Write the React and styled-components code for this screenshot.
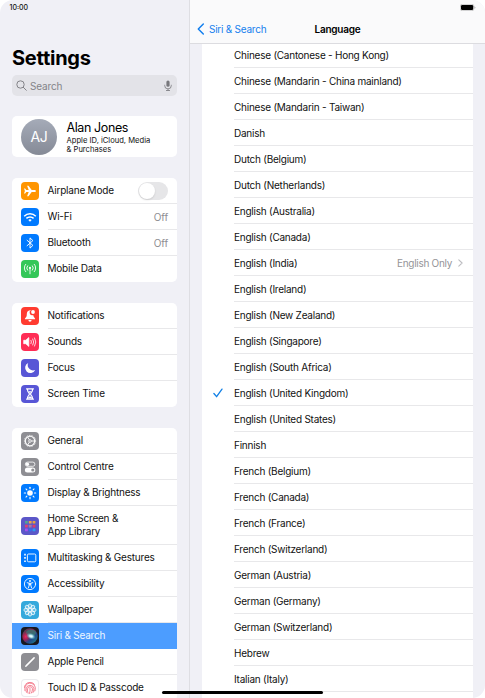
import React, { useState } from 'react';
import styled, { createGlobalStyle } from 'styled-components';

const languages = [
  'Chinese (Cantonese - Hong Kong)',
  'Chinese (Mandarin - China mainland)',
  'Chinese (Mandarin - Taiwan)',
  'Danish',
  'Dutch (Belgium)',
  'Dutch (Netherlands)',
  'English (Australia)',
  'English (Canada)',
  'English (India)',
  'English (Ireland)',
  'English (New Zealand)',
  'English (Singapore)',
  'English (South Africa)',
  'English (United Kingdom)',
  'English (United States)',
  'Finnish',
  'French (Belgium)',
  'French (Canada)',
  'French (France)',
  'French (Switzerland)',
  'German (Austria)',
  'German (Germany)',
  'German (Switzerland)',
  'Hebrew',
  'Italian (Italy)',
];

const petals = [0, 45, 90, 135, 180, 225, 270, 315];

// glyphs are drawn on an 18 x 18 grid
const glyphs = {
  airplane: (
    <path fill="#fff" d="M15 9c0-.7-.9-1.1-1.8-1.1h-2.5L7.5 3.7H6.1l1.6 4.2H5.3L4.1 6.6H3L3.9 9 3 11.4h1.1l1.2-1.3h2.4l-1.6 4.2h1.4l3.2-4.2h2.5c.9 0 1.8-.4 1.8-1.1z" />
  ),
  wifi: (
    <g fill="none" stroke="#fff" strokeWidth="1.5">
      <path d="M3.2 8.2a8.2 8.2 0 0 1 11.6 0" />
      <path d="M5.4 10.4a5.1 5.1 0 0 1 7.2 0" />
      <path d="M9 13.8l-1.7-1.7a2.4 2.4 0 0 1 3.4 0z" fill="#fff" stroke="none" />
    </g>
  ),
  bluetooth: (
    <path fill="none" stroke="#fff" strokeWidth=".95" strokeLinejoin="round" strokeLinecap="round" d="M6.1 6.3l5.8 5.1L9 14.1V3.9l2.9 2.7-5.8 5.1" />
  ),
  mobile: (
    <g fill="none" stroke="#fff" strokeWidth=".9" strokeLinecap="round">
      <path d="M9 8.6v5.2" />
      <circle cx="9" cy="7.9" r="1.1" fill="#fff" stroke="none" />
      <path d="M6.6 5.8a3.3 3.3 0 0 0 0 4.4M11.4 5.8a3.3 3.3 0 0 1 0 4.4M4.7 4.3a5.4 5.4 0 0 0 0 7.4M13.3 4.3a5.4 5.4 0 0 1 0 7.4" />
    </g>
  ),
  bell: (
    <g fill="#fff">
      <path d="M9 3.2c-2.3.2-3.2 2-3.2 4 0 2.2-.6 3-1.8 4.2-.3.4 0 .9.4.9h9.2c.4 0 .7-.5.4-.9-1-1-1.6-1.8-1.8-3.3A2.7 2.7 0 0 1 9.800 3.300z" />
      <path d="M7.4 13.1h3.2a1.6 1.6 0 0 1-3.2 0z" />
      <circle cx="12" cy="5" r="1.9" />
    </g>
  ),
  sounds: (
    <g fill="none" stroke="#fff" strokeWidth=".8" strokeLinecap="round">
      <path d="M3 7.3h1.8l3-2.7v8.8l-3-2.7H3z" fill="#fff" strokeLinejoin="round" />
      <path d="M10 7.3q1 1.7 0 3.4M11.8 6q1.9 3 0 6M13.6 4.9q2.6 4.1 0 8.2" />
    </g>
  ),
  moon: <path fill="#fff" d="M7.2 3.9A5.3 5.3 0 1 0 14.2 11 5.4 5.4 0 0 1 7.2 3.9z" />,
  hourglass: (
    <g fill="none" stroke="#fff" strokeWidth="1.2">
      <path d="M5.5 3.9h7M5.5 14.1h7" strokeLinecap="round" />
      <path d="M6.6 4v1.5c0 1.6 1.8 2.2 1.8 3.5S6.6 10.9 6.6 12.5V14M11.4 4v1.5c0 1.6-1.8 2.2-1.8 3.5s1.8 1.9 1.8 3.5V14" />
      <path d="M7.4 6.2h3.2L9 8zM7 13.6c0-1.6 1-2 2-2s2 .4 2 2z" fill="#fff" stroke="none" />
    </g>
  ),
  gear: (
    <g fill="none" stroke="#fff">
      <circle cx="9" cy="9" r="4.7" strokeWidth="1.1" />
      <circle cx="9" cy="9" r="5.6" strokeWidth="1" strokeDasharray=".9 .86" />
      <circle cx="9" cy="9" r="1.3" strokeWidth=".8" />
      <path d="M10.3 9h3.3M8.3 7.8L6.7 5M8.3 10.2L6.7 13" strokeWidth=".9" />
    </g>
  ),
  toggles: (
    <g>
      <rect x="4.3" y="4.1" width="9.6" height="4.2" rx="2.1" fill="none" stroke="#fff" strokeWidth=".8" />
      <circle cx="6.4" cy="6.2" r="1.7" fill="#fff" />
      <rect x="3.9" y="9.5" width="10.4" height="5" rx="2.5" fill="#fff" />
      <circle cx="11.8" cy="12" r="1.6" fill="#8e8e93" />
    </g>
  ),
  sun: (
    <g>
      <circle cx="9" cy="9" r="2.8" fill="#fff" />
      {petals.map((deg) => (
        <path key={deg} d="M9 3.3v1.3" stroke="#fff" strokeWidth="1.1" strokeLinecap="round" transform={`rotate(${deg} 9 9)`} />
      ))}
    </g>
  ),
  grid: (
    <g>
      <rect x="4" y="4" width="2.8" height="2.6" rx=".5" fill="#4fa88f" />
      <rect x="7.8" y="4" width="2.8" height="2.6" rx=".5" fill="#efa64b" />
      <rect x="11.6" y="4" width="2.8" height="2.6" rx=".5" fill="#e6a23c" />
      <rect x="4" y="7.8" width="2.8" height="2.6" rx=".5" fill="#df3f72" />
      <rect x="7.8" y="7.8" width="2.8" height="2.6" rx=".5" fill="#a878a4" />
      <rect x="11.6" y="7.8" width="2.8" height="2.6" rx=".5" fill="#e23b67" />
      <rect x="4" y="11.6" width="2.8" height="2.6" rx=".5" fill="#a64ff0" />
      <rect x="7.8" y="11.6" width="2.8" height="2.6" rx=".5" fill="#2e6ff2" />
      <rect x="11.6" y="11.6" width="2.8" height="2.6" rx=".5" fill="#2a9af0" />
    </g>
  ),
  multitask: (
    <g>
      <rect x="6.4" y="5" width="8.4" height="7.8" rx="1.2" fill="none" stroke="#fff" strokeWidth=".9" />
      <path d="M3.2 4.8h1.6v1.7H3.2zM3.2 8.1h1.6v1.7H3.2zM3.2 11.4h1.6v1.7H3.2z" fill="#fff" />
    </g>
  ),
  accessibility: (
    <g fill="none" stroke="#fff" strokeWidth=".9" strokeLinecap="round">
      <circle cx="9" cy="9" r="5.6" />
      <circle cx="9" cy="6" r=".95" fill="#fff" stroke="none" />
      <path d="M6.2 7.7l2 .5v1.9l-.7 2.6M11.8 7.7l-2 .5v1.9l.7 2.6M8.6 8.2h.8v1.7h-.8z" />
    </g>
  ),
  flower: (
    <g fill="rgba(255,255,255,.25)" stroke="#fff" strokeWidth=".75">
      {petals.map((deg) => (
        <ellipse key={deg} cx="9" cy="5" rx="1.7" ry="2.1" transform={`rotate(${deg} 9 9)`} />
      ))}
      <circle cx="9" cy="9" r="1.7" />
    </g>
  ),
  siri: (
    <g>
      <defs>
        <linearGradient id="siriRing" x1="0" y1="0" x2="1" y2="1">
          <stop offset="0" stopColor="#35545a" />
          <stop offset=".4" stopColor="#8f1d4c" />
          <stop offset=".65" stopColor="#224a8a" />
          <stop offset="1" stopColor="#188f8e" />
        </linearGradient>
        <radialGradient id="siriPink">
          <stop offset="0" stopColor="#f02a62" />
          <stop offset="1" stopColor="#b01d54" stopOpacity="0" />
        </radialGradient>
        <radialGradient id="siriGlow">
          <stop offset="0" stopColor="#fff" />
          <stop offset=".35" stopColor="#b8e8ee" />
          <stop offset="1" stopColor="#40a8b8" stopOpacity="0" />
        </radialGradient>
      </defs>
      <circle cx="9" cy="9" r="7.7" fill="url(#siriRing)" />
      <ellipse cx="10" cy="5.8" rx="5" ry="3.4" fill="#2f8078" opacity=".75" />
      <ellipse cx="4.800" cy="9.600" rx="4.600" ry="5.200" fill="url(#siriPink)" />
      <ellipse cx="10" cy="9.2" rx="5" ry="3.2" fill="url(#siriGlow)" transform="rotate(18 10 9.2)" />
    </g>
  ),
  pencil: (
    <g stroke="#fff" strokeLinecap="round">
      <path d="M5.1 12.9l8-8" strokeWidth="1.5" />
      <path d="M4.3 13.7l.6-.6" strokeWidth=".7" />
    </g>
  ),
  touch: (
    <g fill="none" stroke="#f1667a" strokeWidth=".8" strokeLinecap="round">
      <path d="M4.8 5a5.8 5.8 0 0 1 8.6.3M3.5 8.4A5.6 5.6 0 0 1 4.2 6M4 11.7a7 7 0 0 1-.1-2A5.2 5.2 0 0 1 14.3 9q.1 1.5-.5 3" />
      <path d="M5.4 13.3a8 8 0 0 1-.2-3.6 3.9 3.9 0 0 1 7.7-.2q.1 2.2-.9 4.1" />
      <path d="M7 14.2a8 8 0 0 1-.4-4.5 2.5 2.5 0 0 1 4.9.1 7.5 7.5 0 0 1-1.3 4.4M9 9.3q.4 3-.5 5.2" />
    </g>
  ),
};

const groups = [
  [
    { icon: 'airplane', color: '#ff9500', text: 'Airplane Mode', toggle: true },
    { icon: 'wifi', color: '#007aff', text: 'Wi-Fi', value: 'Off' },
    { icon: 'bluetooth', color: '#007aff', text: 'Bluetooth', value: 'Off' },
    { icon: 'mobile', color: '#34c759', text: 'Mobile Data' },
  ],
  [
    { icon: 'bell', color: '#ff3b30', text: 'Notifications' },
    { icon: 'sounds', color: '#ff2d55', text: 'Sounds' },
    { icon: 'moon', color: '#5856d6', text: 'Focus' },
    { icon: 'hourglass', color: '#5856d6', text: 'Screen Time' },
  ],
  [
    { icon: 'gear', color: '#8e8e93', text: 'General' },
    { icon: 'toggles', color: '#8e8e93', text: 'Control Centre' },
    { icon: 'sun', color: '#007aff', text: 'Display & Brightness' },
    { icon: 'grid', color: '#5b57c8', text: 'Home Screen &\nApp Library', tall: true },
    { icon: 'multitask', color: '#007aff', text: 'Multitasking & Gestures' },
    { icon: 'accessibility', color: '#007aff', text: 'Accessibility' },
    { icon: 'flower', color: '#35a9dc', text: 'Wallpaper' },
    { icon: 'siri', color: '#17181f', text: 'Siri & Search' },
    { icon: 'pencil', color: '#8e8e93', text: 'Apple Pencil' },
    { icon: 'touch', color: '#fff', text: 'Touch ID & Passcode', outlined: true },
  ],
];

function App() {
  const [page, setPage] = useState('Siri & Search');
  const [language, setLanguage] = useState('English (United Kingdom)');
  const [airplane, setAirplane] = useState(false);

  const renderItems = (items) => {
    return items.map(({ icon, color, text, value, toggle, tall, outlined }) => (
      <MenuRow key={text} $tall={tall} $active={page === text} onClick={() => !toggle && setPage(text)}>
        <IconTile $color={color} $outlined={outlined} viewBox="0 0 18 18">{glyphs[icon]}</IconTile>
        <MenuLabel>
          <MenuText>{text}</MenuText>
          {value && <MenuValue>{value}</MenuValue>}
          {toggle && <Switch $on={airplane} onClick={() => setAirplane(!airplane)} />}
        </MenuLabel>
      </MenuRow>
    ))
  }

  return (
    <>
      <GlobalStyle />
      <Screen>
        <Sidebar>
          <Clock>10:00</Clock>
          <Title>Settings</Title>
          <SearchBar>
            <svg width="11" height="11" viewBox="0 0 11 11" fill="none" stroke="#838388" strokeWidth="1">
              <circle cx="4.5" cy="4.5" r="3.7" />
              <path d="M7.3 7.3l3 3" strokeLinecap="round" />
            </svg>
            <SearchText>Search</SearchText>
            <svg width="8" height="11" viewBox="0 0 8 11" fill="none" stroke="#77777c" strokeWidth=".8">
              <rect x="2.4" y=".4" width="3.2" height="6.4" rx="1.6" fill="#77777c" stroke="none" />
              <path d="M.7 4.8v.8a3.3 3.3 0 0 0 6.6 0v-.8M4 8.9v1.6M2 10.5h4" />
            </svg>
          </SearchBar>
          <Profile>
            <Avatar>AJ</Avatar>
            <div>
              <ProfileName>Alan Jones</ProfileName>
              <ProfileInfo>Apple ID, iCloud, Media<br />&amp; Purchases</ProfileInfo>
            </div>
          </Profile>
          {groups.map((items) => <Card key={items[0].text}>{renderItems(items)}</Card>)}
        </Sidebar>
        <Detail>
          <Header>
            <StatusBar>
              <svg width="16" height="7" viewBox="0 0 16 7">
                <rect x=".3" y=".3" width="13.6" height="6.4" rx="2" fill="none" stroke="#a8a8a8" strokeWidth=".6" />
                <rect x="1" y="1" width="12.2" height="5" rx="1.3" fill="#000" />
                <path d="M14.6 2.4v2.2q.8-.3.8-1.1t-.8-1.1z" fill="#999" />
              </svg>
            </StatusBar>
            <NavBar>
              <BackButton>
                <svg width="8" height="12" viewBox="0 0 8 12" fill="none" stroke="#1580ee" strokeWidth="1.5" strokeLinecap="round" strokeLinejoin="round">
                  <path d="M6.3 1L1.3 6l5 5" />
                </svg>
                Siri &amp; Search
              </BackButton>
              <PageTitle>Language</PageTitle>
            </NavBar>
          </Header>
          <LanguageList>
            {languages.map((name) => (
              <LanguageRow key={name} onClick={() => setLanguage(name)}>
                <CheckCell>
                  {language === name && (
                    <svg width="10" height="10" viewBox="0 0 10 10" fill="none" stroke="#1180e6" strokeWidth="1.3" strokeLinecap="round" strokeLinejoin="round">
                      <path d="M.9 5.5l2.7 3.2L9 1.1" />
                    </svg>
                  )}
                </CheckCell>
                <LanguageLabel>
                  <span>{name}</span>
                  {name === 'English (India)' && (
                    <LanguageValue>
                      English Only
                      <svg width="5" height="8" viewBox="0 0 5 8" fill="none" stroke="#bdbdc1" strokeWidth="1.1" strokeLinecap="round" strokeLinejoin="round">
                        <path d="M.8.9L4.1 4 .8 7.1" />
                      </svg>
                    </LanguageValue>
                  )}
                </LanguageLabel>
              </LanguageRow>
            ))}
          </LanguageList>
        </Detail>
        <HomeIndicator />
      </Screen>
    </>
  );
}

const GlobalStyle = createGlobalStyle`
  * {
    box-sizing: border-box;
  }

  body {
    margin: 0;
    background: #fff;
    font-family: Inter, "Liberation Sans", sans-serif;
    font-size: 10px;
    letter-spacing: -0.24px;
    color: #111;
    overflow: hidden;
  }
`

const Screen = styled.div`
  position: relative;
  display: flex;
  width: 485px;
  height: 698px;
  border-radius: 13px;
  overflow: hidden;
  background: #f0f0f6;
`

const Sidebar = styled.aside`
  display: flex;
  flex-direction: column;
  flex: none;
  width: 190px;
  padding: 0 12px;
  border-right: 1px solid #dedee3;
`

const Clock = styled.div`
  flex: none;
  height: 46px;
  margin-left: -2.5px;
  padding-top: 2.5px;
  font-size: 7px;
  line-height: 10px;
  font-weight: 500;
  letter-spacing: 0;
`

const Title = styled.h1`
  flex: none;
  margin: 0;
  height: 29px;
  font-size: 20px;
  line-height: 25px;
  font-weight: 700;
  letter-spacing: -0.25px;
  color: #000;
`

const SearchBar = styled.div`
  display: flex;
  align-items: center;
  flex: none;
  width: 165px;
  height: 21px;
  padding: 0 5px 0 4px;
  border-radius: 5px;
  background: #e3e3e8;
`

const SearchText = styled.span`
  flex: 1;
  margin-left: 3px;
  letter-spacing: -0.15px;
  color: #838388;
`

const Profile = styled.div`
  display: flex;
  align-items: center;
  flex: none;
  width: 165px;
  height: 41px;
  margin-top: 20px;
  padding-left: 9px;
  gap: 9.5px;
  border-radius: 5px;
  background: #fff;
`

const Avatar = styled.div`
  width: 36px;
  height: 36px;
  border-radius: 50%;
  background: linear-gradient(#a5abb8, #858a96);
  color: #fff;
  font-size: 14px;
  line-height: 36px;
  text-align: center;
`

const ProfileName = styled.div`
  padding-top: 1px;
  font-size: 12.5px;
  line-height: 14px;
  letter-spacing: -0.4px;
  color: #000;
`

const ProfileInfo = styled.div`
  padding-top: 1px;
  font-size: 7.6px;
  line-height: 9px;
  letter-spacing: 0;
`

const Card = styled.div`
  flex: none;
  width: 165px;
  margin-top: 21px;
  border-radius: 5px;
  background: #fff;
  overflow: hidden;
`

const MenuLabel = styled.div`
  display: flex;
  align-items: center;
  flex: 1;
  align-self: stretch;
  margin-left: 8.5px;
  padding-right: 9px;
  border-bottom: 1px solid #e8e8ea;
`

const MenuRow = styled.div`
  display: flex;
  align-items: center;
  height: ${props => props.$tall ? '39px' : '26px'};
  padding-left: 9px;
  color: ${props => props.$active ? '#eef6ff' : '#111'};
  background: ${props => props.$active ? '#4c9dff' : 'transparent'};

  &:last-child ${MenuLabel} {
    border-color: transparent;
  }

  ${props => props.$active && `${MenuLabel} { border-color: transparent; }`}
`

const IconTile = styled.svg`
  flex: none;
  width: 18px;
  height: 18px;
  border-radius: 4px;
  background: ${props => props.$color};
  box-shadow: ${props => props.$outlined ? 'inset 0 0 0 1px #ebebee' : 'none'};
`

const MenuText = styled.span`
  flex: 1;
  line-height: 13px;
  letter-spacing: -0.21px;
  white-space: pre;
`

const MenuValue = styled.span`
  letter-spacing: -0.1px;
  color: #8e8e92;
`

const Switch = styled.div`
  width: 30px;
  height: 18px;
  padding: 1px;
  border-radius: 9px;
  background: ${props => props.$on ? '#34c759' : '#e6e6e8'};

  &::after {
    content: '';
    display: block;
    width: 16px;
    height: 16px;
    border-radius: 50%;
    background: #fff;
    box-shadow: 0 1px 2px rgba(0, 0, 0, 0.12);
    transform: translateX(${props => props.$on ? '12px' : '0'});
  }
`

const Detail = styled.main`
  display: flex;
  flex-direction: column;
  flex: 1;
  min-width: 0;
`

const Header = styled.header`
  flex: none;
  height: 44px;
  background: #fafafb;
  border-bottom: 1px solid #dcdce0;
`

const StatusBar = styled.div`
  display: flex;
  justify-content: flex-end;
  height: 15px;
  padding: 3.5px 9px 0 0;
`

const NavBar = styled.div`
  display: grid;
  grid-template-columns: 1fr auto 1fr;
  align-items: center;
  height: 28px;
  padding: 0 7px;
`

const BackButton = styled.div`
  display: flex;
  align-items: center;
  gap: 4px;
  color: #1580ee;
`

const PageTitle = styled.div`
  font-weight: 600;
  color: #000;
`

const LanguageList = styled.div`
  flex: 1;
  min-height: 0;
  margin: -2px 12px 0 12px;
  background: #fff;
  overflow: hidden;
  clip-path: inset(2px 0 0 0);
`

const LanguageRow = styled.div`
  display: flex;
  height: 26px;
`

const CheckCell = styled.div`
  display: flex;
  align-items: center;
  justify-content: center;
  width: 32px;
`

const LanguageLabel = styled.div`
  display: flex;
  flex: 1;
  align-items: center;
  justify-content: space-between;
  border-bottom: 1px solid #e8e8ea;
`

const LanguageValue = styled.div`
  display: flex;
  align-items: center;
  gap: 6px;
  padding-right: 10px;
  letter-spacing: -0.3px;
  color: #949498;
`

const HomeIndicator = styled.div`
  position: absolute;
  left: 162px;
  bottom: 4px;
  width: 161px;
  height: 3px;
  border-radius: 2px;
  background: #000;
`

export default App;
